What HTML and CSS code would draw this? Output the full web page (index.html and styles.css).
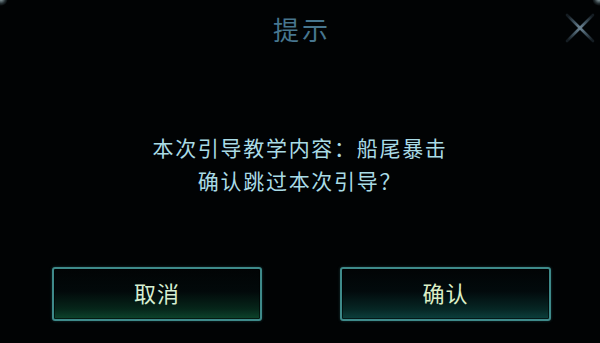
FILE: index.html
```html
<!DOCTYPE html>
<html>
<head>
<meta charset="utf-8">
<title>提示</title>
<link rel="stylesheet" href="styles.css">
</head>
<body>
	<!-- dialog -->
	<div class="dialog">
		<div class="corner cornerLeft"></div>
		<div class="corner cornerRight"></div>

		<div class="title">提示</div>

		<!-- close button -->
		<svg class="closeBtn" width="32" height="32" viewBox="0 0 32 32">
			<defs>
				<radialGradient id="xGlow" cx="16" cy="16" r="17" gradientUnits="userSpaceOnUse">
					<stop offset="0" stop-color="#6f8797"/>
					<stop offset="0.5" stop-color="#3f525e"/>
					<stop offset="1" stop-color="#141c22"/>
				</radialGradient>
			</defs>
			<path d="M3 3 L29 29 M29 3 L3 29" stroke="url(#xGlow)" stroke-width="2.6" stroke-linecap="round" fill="none"/>
		</svg>

		<div class="message">
			<div>本次引导教学内容：船尾暴击</div>
			<div>确认跳过本次引导？</div>
		</div>

		<!-- bottom buttons -->
		<div class="buttonRow">
			<button class="btn btnCancel">取消</button>
			<button class="btn btnOk">确认</button>
		</div>
	</div>
</body>
</html>
```

FILE: styles.css
```css
body {
	margin: 0;
	background-color: #010304;
	font-family: "Noto Sans CJK SC", "Noto Sans", sans-serif;
}

.dialog {
	position: relative;
	width: 600px;
	height: 343px;
	display: flex;
	flex-direction: column;
	overflow: hidden;
}

.corner {
	position: absolute;
	top: -8px;
	width: 14px;
	height: 14px;
	border-radius: 50%;
	background: radial-gradient(circle, rgba(190, 215, 220, 0.8) 0%, rgba(120, 150, 160, 0.3) 45%, rgba(0, 0, 0, 0) 70%);
}
.cornerLeft {
	left: -6px;
}
.cornerRight {
	right: -6px;
}

.title {
	height: 57px;
	line-height: 57px;
	text-align: center;
	font-size: 26px;
	letter-spacing: 3px;
	padding-left: 4px;
	color: #47768f;
}

.closeBtn {
	position: absolute;
	left: 564px;
	top: 12px;
}

.message {
	margin-top: 74px;
	text-align: center;
	font-size: 21px;
	line-height: 33px;
	letter-spacing: 1.7px;
	color: #a9dbe6;
}

.buttonRow {
	margin-top: 70px;
	padding-left: 52px;
	display: flex;
	gap: 78px;
}

.btn {
	width: 210px;
	height: 54px;
	border: 2px solid #3e8a8a;
	border-radius: 3px;
	font-family: "Noto Sans CJK SC", "Noto Sans", sans-serif;
	font-size: 22px;
	letter-spacing: 1px;
	padding: 0 0 5px 0;
	box-shadow: inset 0 0 0 1px rgba(0, 0, 0, 0.6), 0 0 3px rgba(70, 160, 160, 0.35);
}
.btnCancel {
	color: #d6efd2;
	background: linear-gradient(to bottom, #010405 0%, #02090a 45%, #06261a 80%, #0d452c 100%);
}
.btnOk {
	width: 211px;
	color: #dcefc6;
	background: linear-gradient(to bottom, #010405 0%, #020a0c 45%, #062624 80%, #0c403d 100%);
}
```
